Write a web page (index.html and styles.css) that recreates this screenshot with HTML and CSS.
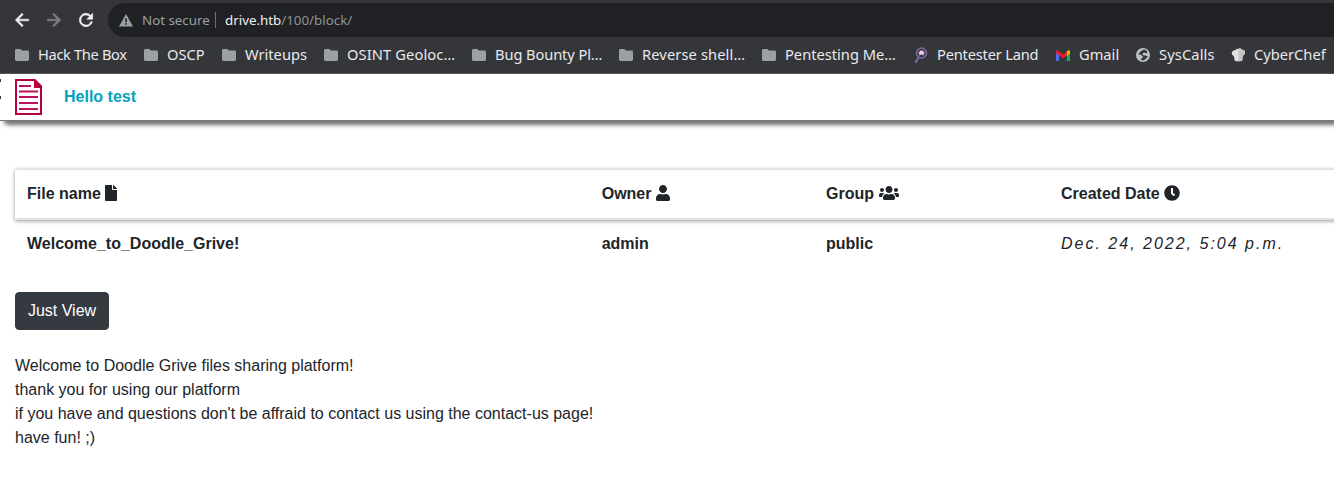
FILE: index.html
```html
<!DOCTYPE html>
<html lang="en">
<head>
<meta charset="utf-8">
<title>Doodle Grive</title>
<link rel="stylesheet" href="styles.css">
</head>
<body>
<header class="browser">
  <div class="toolbar">
    <svg class="nav-icon" viewBox="0 0 24 24" fill="#f1f1f3"><path d="M20 11H7.830l5.590-5.590L12 4l-8 8 8 8 1.410-1.410L7.830 13H20z" stroke="#f1f1f3" stroke-width=".7"/></svg>
    <svg class="nav-icon" viewBox="0 0 24 24" fill="#808084"><path d="m12 4-1.410 1.410L16.170 11H4v2h12.170l-5.580 5.590L12 20l8-8z" stroke="#808084" stroke-width=".7"/></svg>
    <svg class="nav-icon" viewBox="0 0 24 24" fill="#f1f1f3"><path d="M17.650 6.350A8 8 0 1 0 19.730 14h-2.080A6 6 0 1 1 12 6c1.660 0 3.140.69 4.220 1.780L13 11h7V4z" stroke="#f1f1f3" stroke-width=".7"/></svg>
    <div class="address">
      <svg class="warning" viewBox="0 0 14 13"><path d="M7 0 14 12.500H0z" fill="#9aa0a6"/><path d="M6.200 4.500h1.600V8H6.200zM6.200 9h1.600v1.700H6.200z" fill="#202124"/></svg>
      <span class="security">Not secure</span>
      <span class="divider"></span>
      <span class="url"><b>drive.htb</b>/100/block/</span>
    </div>
  </div>
  <svg class="symbols"><symbol id="folder" viewBox="0 0 14 12"><path d="M1.400 0h4l1.500 1.500h5.700A1.400 1.400 0 0 1 14 2.900v7.700a1.400 1.400 0 0 1-1.400 1.400H1.400A1.400 1.400 0 0 1 0 10.600V1.400A1.400 1.400 0 0 1 1.400 0z" fill="#9aa0a6"/></symbol></svg>
  <nav class="bookmarks">
    <a class="tight"><svg class="folder"><use href="#folder"/></svg><span>Hack The Box</span></a>
    <a><svg class="folder"><use href="#folder"/></svg><span>OSCP</span></a>
    <a><svg class="folder"><use href="#folder"/></svg><span>Writeups</span></a>
    <a class="loose"><svg class="folder"><use href="#folder"/></svg><span>OSINT Geoloc…</span></a>
    <a class="close"><svg class="folder"><use href="#folder"/></svg><span>Bug Bounty Pl…</span></a>
    <a class="loose"><svg class="folder"><use href="#folder"/></svg><span>Reverse shell…</span></a>
    <a><svg class="folder"><use href="#folder"/></svg><span>Pentesting Me…</span></a>
    <a class="snug"><svg class="favicon" viewBox="0 0 14 16"><circle cx="7.500" cy="6" r="5" fill="none" stroke="#7b6aa0" stroke-width="1.500"/><path d="m4.500 10.500-2.500 4.500" stroke="#7b6aa0" stroke-width="2.200" stroke-linecap="round"/><path d="m5.800 3 1 .8h1.400l1-.8v2h1.300v1.200H9.300l1 2.300-2.800-.9-2.800.9 1-2.300H4.500V5h1.300z" fill="#f2c9ef"/></svg><span>Pentester Land</span></a>
    <a><svg class="favicon" viewBox="0 0 14 16"><path d="M0 5v8.500q0 .5.500.5h2.700V7z" fill="#4b70f5"/><path d="M10.800 7v7h2.700q.5 0 .5-.5V5z" fill="#20a956"/><path d="M0 6V5q0-2.500 2-1.500l5 4 5-4v4L7 11.500 0 6z" fill="#e81c2d"/><path d="M10.800 4.500 12 3.500q2-1 2 1.500v1.500L10.800 9z" fill="#fbbc04"/></svg><span>Gmail</span></a>
    <a class="loose"><svg class="favicon" viewBox="0 0 14 16"><circle cx="7" cy="8" r="7" fill="#bdc1c6"/><path d="M8 2.500 4.800 4.300 2 7.200l3 .5 2 2-.8 1.500-1.700.8 2 1.800 3-1.600 2.500-2.700-2.500-1L7 8.200l-.5-2 1.800-.7 2.200.9 1-1.500q-1.200-2-3.500-2.400z" fill="#35363a"/></svg><span>SysCalls</span></a>
    <a><svg class="favicon wide" viewBox="0 0 16 16"><path d="M3 9Q0 7.500 1 5T4.500 3Q6 .500 8 1.500 10-.2 11.700 2.500q3-.2 3.300 2.500t-2.500 4L12 14q-4 1.500-8 0z" fill="#e1e1e1"/><path d="M8 1.500Q10-.2 11.700 2.500q3-.2 3.300 2.500t-2.500 4L12 14l-4 .6z" fill="#c4c4c4"/></svg><span>CyberChef</span></a>
  </nav>
</header>
<div class="site-bar">
  <div class="edge"><i></i><i></i></div>
  <svg class="logo" viewBox="0 0 27 36"><path d="M1 1h18.500L26 7.500V35H1z" fill="#fff" stroke="#b4003d" stroke-width="2"/><path d="M19 0h1l7 7v2h-8z" fill="#b4003d"/><path d="M4 7h12M4 12.500h19M4 18h19M4 24h19M4 30h19" stroke="#b9145c" stroke-width="1.900"/></svg>
  <strong>Hello test</strong>
</div>
<main>
  <div class="table">
    <div class="row head">
      <span>File name <svg class="i-file" viewBox="0 0 384 512"><path d="M224 136V0H24C10.700 0 0 10.700 0 24v464c0 13.300 10.700 24 24 24h336c13.300 0 24-10.700 24-24V160H248c-13.200 0-24-10.800-24-24zm160-14.100v6.100H256V0h6.100c6.400 0 12.500 2.500 17 7l97.900 98c4.500 4.500 7 10.600 7 16.900z"/></svg></span>
      <span>Owner <svg class="i-user" viewBox="0 0 448 512"><path d="M224 256c70.700 0 128-57.300 128-128S294.700 0 224 0 96 57.300 96 128s57.300 128 128 128zm89.600 32h-16.700c-22.200 10.200-46.900 16-72.900 16s-50.600-5.800-72.900-16h-16.700C60.200 288 0 348.200 0 422.400V464c0 26.500 21.500 48 48 48h352c26.500 0 48-21.500 48-48v-41.600c0-74.200-60.200-134.400-134.400-134.400z"/></svg></span>
      <span>Group <svg class="i-users" viewBox="0 0 640 512"><path d="M96 224c35.300 0 64-28.700 64-64s-28.700-64-64-64-64 28.700-64 64 28.700 64 64 64zm448 0c35.300 0 64-28.700 64-64s-28.700-64-64-64-64 28.700-64 64 28.700 64 64 64zm32 32h-64c-17.600 0-33.500 7.100-45.100 18.600 40.300 22.100 68.900 62 75.100 109.400h66c17.700 0 32-14.300 32-32v-32c0-35.300-28.700-64-64-64zm-256 0c61.900 0 112-50.100 112-112S381.900 32 320 32 208 82.100 208 144s50.100 112 112 112zm76.800 32h-8.300c-20.800 10-43.900 16-68.500 16s-47.600-6-68.500-16h-8.300C179.600 288 128 339.600 128 403.200V432c0 26.500 21.500 48 48 48h288c26.500 0 48-21.500 48-48v-28.800c0-63.600-51.600-115.200-115.200-115.200zm-223.700-13.400C161.500 263.100 145.600 256 128 256H64c-35.300 0-64 28.700-64 64v32c0 17.700 14.300 32 32 32h65.900c6.300-47.400 34.900-87.300 75.200-109.400z"/></svg></span>
      <span>Created Date <svg class="i-clock" viewBox="0 0 512 512"><path d="M256 8C119 8 8 119 8 256s111 248 248 248 248-111 248-248S393 8 256 8zm92.490 313-20 25a16 16 0 0 1-22.490 2.500l-67-49.720a40 40 0 0 1-15-31.230V112a16 16 0 0 1 16-16h32a16 16 0 0 1 16 16v144l58 42.500a16 16 0 0 1 2.490 22.500z"/></svg></span>
    </div>
    <div class="row">
      <span>Welcome_to_Doodle_Grive!</span><span>admin</span><span>public</span><em>Dec. 24, 2022, 5:04 p.m.</em>
    </div>
  </div>
  <button class="view">Just View</button>
  <p class="content">Welcome to Doodle Grive files sharing platform!<br>thank you for using our platform<br>if you have and questions don't be affraid to contact us using the contact-us page!<br>have fun! ;)</p>
</main>
</body>
</html>
```
FILE: styles.css
```css
* { box-sizing: border-box; }
body { margin: 0; height: 487px; overflow: hidden; background: #fff; color: #212529; font: 16px/24px "Liberation Sans", Arial, sans-serif; }
svg { flex: none; }
.symbols { display: none; }
.browser { height: 74px; background: #35363a; border-bottom: 1px solid #55565b; font-family: "Noto Sans", sans-serif; }
.toolbar { display: flex; align-items: center; height: 37px; padding: 3px 0 0 12px; gap: 12px; }
.nav-icon { width: 20px; height: 20px; }
.address { display: flex; align-items: center; flex: 1; height: 34px; padding-left: 11px; background: #202124; border-radius: 17px 0 0 17px; font-size: 13.33px; color: #9aa0a6; }
.warning { width: 14px; height: 13px; margin-right: 9px; }
.security { width: 73px; white-space: nowrap; }
.divider { width: 1px; height: 16px; background: #6c6f74; margin-right: 9px; }
.url { color: #8f9397; }
.url b { font-weight: 400; color: #f1f1f3; }
.bookmarks { display: grid; grid-template-columns: 129px 78px 102px 148px 147px 143px 152px 142px 80px 95px 1fr; align-items: center; height: 36px; padding-left: 15px; font-size: 14.67px; color: #e8eaed; white-space: nowrap; }
.bookmarks a { display: flex; align-items: center; gap: 9px; }
.bookmarks span { padding-bottom: 3px; }
.bookmarks .tight { letter-spacing: -.35px; }
.bookmarks .snug { letter-spacing: -.2px; }
.bookmarks .close { letter-spacing: -.1px; }
.bookmarks .loose { letter-spacing: .12px; }
.folder { width: 14px; height: 12px; }
.favicon { width: 14px; height: 16px; }
.favicon.wide { width: 15px; margin-right: -1px; }
.site-bar { display: flex; align-items: center; height: 47px; border-bottom: 1px solid #777; box-shadow: 5px 5px 5px -2px #777, 4px 3px 4px #888; clip-path: inset(0 0 -12px 0); color: #06a2b9; }
.edge { display: flex; flex-direction: column; justify-content: space-between; width: 15px; height: 20px; margin-top: -16px; }
.edge i { width: 1px; height: 3px; background: #343a40; }
.logo { width: 27px; height: 36px; margin-right: 22px; }
main { height: 366px; overflow: hidden; padding: 48px 0 0 15px; }
.table { margin-right: -30px; }
.row { display: grid; grid-template-columns: 574.7px 224.3px 235px 1fr; align-items: center; height: 48px; padding-left: 12px; font-weight: 700; }
.head { height: 51px; border-top: 1px solid #dee2e6; border-bottom: 2px solid #dee2e6; box-shadow: 0 1px 4px rgba(0,0,0,.42); }
.head svg { height: 16px; vertical-align: -2px; fill: #212529; }
.i-file { width: 12px; }
.i-user { width: 14px; }
.i-users { width: 20px; margin-left: 1px; }
.i-clock { width: 16px; }
em { font-weight: 400; letter-spacing: 2px; }
.view { display: block; width: 94px; height: 38px; margin: 24px 0 0; padding: 0; border: 1px solid #343a40; border-radius: 4px; background: #343a40; color: #fff; font: inherit; }
.content { margin: 24px 0 0; }
```
